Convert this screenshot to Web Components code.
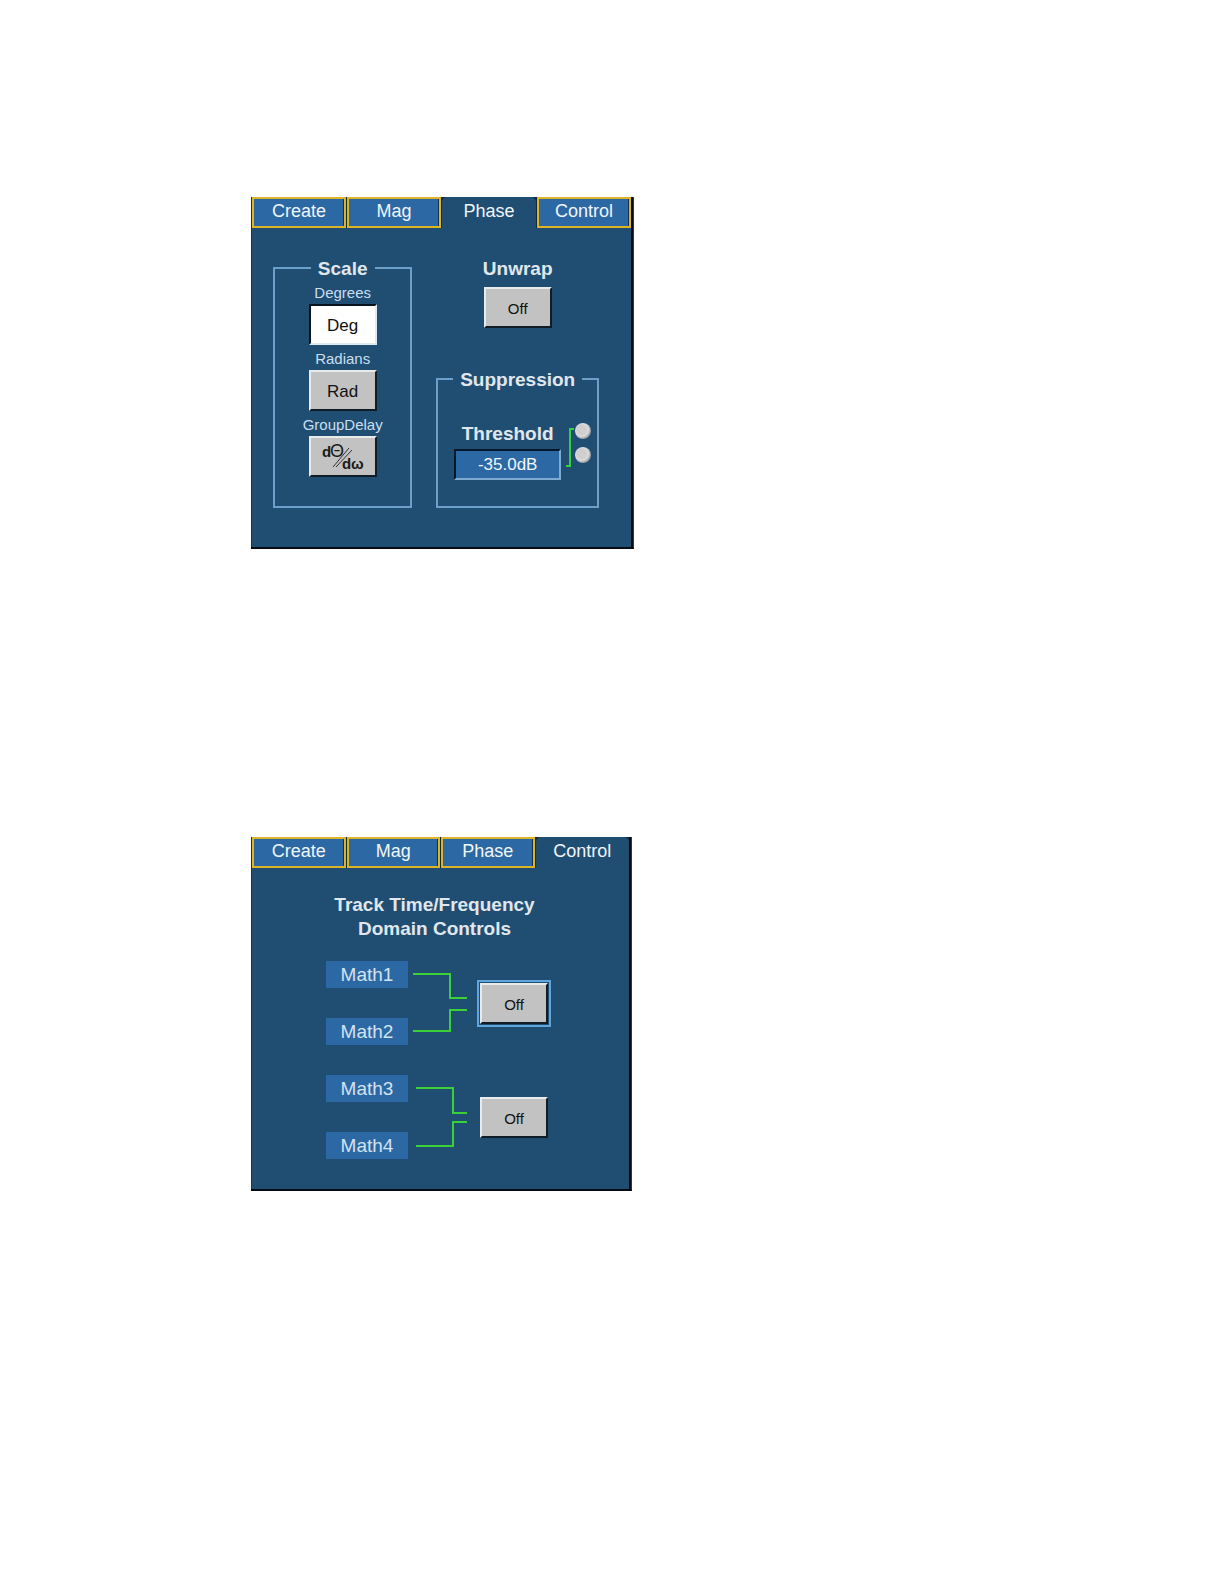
<!DOCTYPE html>
<html lang="en">
<head>
<meta charset="utf-8">
<title>Math setup</title>
<style>
  body {
    margin: 0;
    background: #fff;
    font-family: "Liberation Sans", Arial, sans-serif;
    --panel: #204e72;
    --tab: #2c68a3;
    --line: #6c9fc9;
    --text: #e0e7ec;
  }
  main {
    display: flex;
    flex-direction: column;
    gap: 288px;
    padding: 197px 20px 40px 251px;
  }
  phase-panel { max-width: 383px; }
  control-panel { max-width: 381px; }
</style>
</head>
<body>
<main>
  <phase-panel></phase-panel>
  <control-panel></control-panel>
</main>

<script>
class BaseElement extends HTMLElement {
  render(html) {
    const tpl = document.createElement('template');
    tpl.innerHTML = html;
    this.attachShadow({ mode: 'open' }).appendChild(tpl.content.cloneNode(true));
  }
}

class MathPanel extends BaseElement {
  connectedCallback() {
    const active = this.getAttribute('active');
    const tabs = ['Create', 'Mag', 'Phase', 'Control'];
    this.render(`
      <style>
        :host {
          display: block;
          background: var(--panel);
          border-right: 1px solid #173d5e;
          border-bottom: 2px solid #020a14;
        }
        .frame {
          border-left: 1px solid #17354f;
          border-right: 2px solid #020a14;
        }
        .tabs {
          display: flex;
          gap: 1px;
          background: #10293f;
        }
        button {
          flex: 1;
          height: 31px;
          box-sizing: border-box;
          padding: 0 0 3px;
          border: 2px solid #dfb424;
          border-radius: 0;
          background: var(--tab);
          box-shadow: inset -1px 0 #15334f;
          color: #f0f6fb;
          font: 18px/22px "Liberation Sans", Arial, sans-serif;
        }
        button[aria-selected="true"] {
          border-color: transparent;
          border-radius: 5px 5px 0 0;
          background: var(--panel);
          background-clip: border-box;
          box-shadow: none;
        }
      </style>
      <div class="frame">
        <div class="tabs" role="tablist">
          ${tabs.map(t => `<button role="tab" aria-selected="${t === active}">${t}</button>`).join('')}
        </div>
        <slot></slot>
      </div>
    `);
  }
}

class PushButton extends BaseElement {
  connectedCallback() {
    const label = this.getAttribute('label');
    this.render(`
      <style>
        :host {
          display: flex;
          flex-direction: column;
          align-items: center;
        }
        label {
          padding-top: 2px;
          color: #c9dff0;
          font: 15px/23px "Liberation Sans", Arial, sans-serif;
        }
        :host([heading]) label {
          color: var(--text);
          font: bold 19px/20px "Liberation Sans", Arial, sans-serif;
          margin-bottom: 8px;
        }
        button {
          display: flex;
          align-items: center;
          justify-content: center;
          width: 68px;
          height: 41px;
          box-sizing: border-box;
          padding: 3px 0 0;
          border: 2px solid;
          border-color: #e9eaea #101c26 #101c26 #e9eaea;
          border-radius: 0;
          background: #c2c2c2;
          color: #111;
          font: 17px/20px "Liberation Sans", Arial, sans-serif;
        }
        :host([small]) button {
          font-size: 15px;
        }
        :host([pressed]) button {
          background: #fff;
          border-color: #06121d #dfe9f0 #dfe9f0 #06121d;
        }
        :host([focused]) button {
          outline: 2px solid #5ea6dc;
          outline-offset: 1px;
        }
      </style>
      ${label ? `<label for="btn">${label}</label>` : ''}
      <button id="btn"><slot></slot></button>
    `);
  }
}

class GroupBox extends BaseElement {
  connectedCallback() {
    this.render(`
      <style>
        :host { display: block; }
        fieldset {
          margin: 0;
          padding: 0;
          min-width: 0;
          border: 2px solid var(--line);
        }
        legend {
          margin: 0 auto;
          padding: 2px 7px 0;
          color: var(--text);
          font: bold 19px/20px "Liberation Sans", Arial, sans-serif;
        }
      </style>
      <fieldset>
        <legend>${this.getAttribute('caption')}</legend>
        <slot></slot>
      </fieldset>
    `);
  }
}

class ThresholdField extends BaseElement {
  connectedCallback() {
    this.render(`
      <style>
        :host {
          display: flex;
          padding: 33px 6px 26px 16px;
        }
        .field {
          flex: 1;
          display: flex;
          flex-direction: column;
          align-items: center;
          gap: 4px;
        }
        label {
          color: var(--text);
          font: bold 19px/22px "Liberation Sans", Arial, sans-serif;
        }
        input {
          width: 100%;
          height: 31px;
          box-sizing: border-box;
          padding: 0;
          border: 2px solid;
          border-color: #06182a #7fabd0 #7fabd0 #06182a;
          border-radius: 0;
          background: var(--tab);
          color: #f0f6fb;
          font: 17px/22px "Liberation Sans", Arial, sans-serif;
          text-align: center;
        }
        svg { margin-left: 5px; }
        .knobs {
          display: flex;
          flex-direction: column;
          gap: 8px;
        }
        button {
          width: 16px;
          height: 16px;
          padding: 0;
          border: none;
          border-radius: 50%;
          background: radial-gradient(circle at 42% 42%, #cfcfcf 0 35%, #dcdcdc 50%, #8b8f92 75%, #20292f 100%);
        }
      </style>
      <div class="field">
        <label for="level">Threshold</label>
        <input id="level" value="-35.0dB">
      </div>
      <svg width="9" height="46" fill="none" stroke="#34d13c" stroke-width="2"><path d="M8 6H4V43H0"/></svg>
      <div class="knobs">
        <button aria-label="Up"></button>
        <button aria-label="Down"></button>
      </div>
    `);
  }
}

class PhasePanel extends BaseElement {
  connectedCallback() {
    this.render(`
      <style>
        :host { display: block; }
        .body {
          display: grid;
          grid-template-columns: 6fr 7fr;
          gap: 24px;
          padding: 29px 32px 39px 21px;
        }
        .scale { padding-bottom: 29px; }
        .side {
          display: flex;
          flex-direction: column;
          justify-content: space-between;
        }
        svg { display: block; }
      </style>
      <math-panel active="Phase">
        <div class="body">
          <group-box caption="Scale">
            <div class="scale">
              <push-button label="Degrees" pressed>Deg</push-button>
              <push-button label="Radians">Rad</push-button>
              <push-button label="GroupDelay">
                <svg width="44" height="33" font-family="Liberation Sans" font-weight="bold" fill="#1a1a1a">
                  <text x="1" y="15" font-size="15">d</text>
                  <text x="9" y="15" font-size="18" font-weight="normal">Θ</text>
                  <text x="21" y="27" font-size="15">d</text>
                  <text x="30" y="27" font-size="15">ω</text>
                  <path d="M12 25L28 6M15 25L31 8" stroke="#333" fill="none"/>
                </svg>
              </push-button>
            </div>
          </group-box>
          <div class="side">
            <push-button label="Unwrap" heading small>Off</push-button>
            <group-box caption="Suppression">
              <threshold-field></threshold-field>
            </group-box>
          </div>
        </div>
      </math-panel>
    `);
  }
}

class MathPair extends BaseElement {
  connectedCallback() {
    const names = this.getAttribute('names').split(',');
    this.render(`
      <style>
        :host {
          display: flex;
          align-items: center;
        }
        .names {
          display: grid;
          gap: 30px;
        }
        span {
          width: 82px;
          background: var(--tab);
          color: #d3e2f0;
          font: 19px/27px "Liberation Sans", Arial, sans-serif;
          text-align: center;
        }
      </style>
      <div class="names">${names.map(n => `<span>${n}</span>`).join('')}</div>
      <svg width="72" height="84" fill="none" stroke="#3bd035" stroke-width="2"><path d="${this.getAttribute('wires')}"/></svg>
      <slot></slot>
    `);
  }
}

class ControlPanel extends BaseElement {
  connectedCallback() {
    this.render(`
      <style>
        :host { display: block; }
        .body {
          display: grid;
          gap: 30px;
          padding: 25px 80px 30px 74px;
        }
        h2 {
          margin: 0 0 -10px;
          padding-right: 6px;
          color: var(--text);
          font: bold 19px/24px "Liberation Sans", Arial, sans-serif;
          text-align: center;
        }
      </style>
      <math-panel active="Control">
        <div class="body">
          <h2>Track Time/Frequency<br>Domain Controls</h2>
          <math-pair names="Math1,Math2" wires="M5 13H42V37H59M5 70H42V49H59">
            <push-button small focused>Off</push-button>
          </math-pair>
          <math-pair names="Math3,Math4" wires="M8 13H45V38H59M8 71H45V47H59">
            <push-button small>Off</push-button>
          </math-pair>
        </div>
      </math-panel>
    `);
  }
}

customElements.define('math-panel', MathPanel);
customElements.define('push-button', PushButton);
customElements.define('group-box', GroupBox);
customElements.define('threshold-field', ThresholdField);
customElements.define('phase-panel', PhasePanel);
customElements.define('math-pair', MathPair);
customElements.define('control-panel', ControlPanel);
</script>
</body>
</html>
